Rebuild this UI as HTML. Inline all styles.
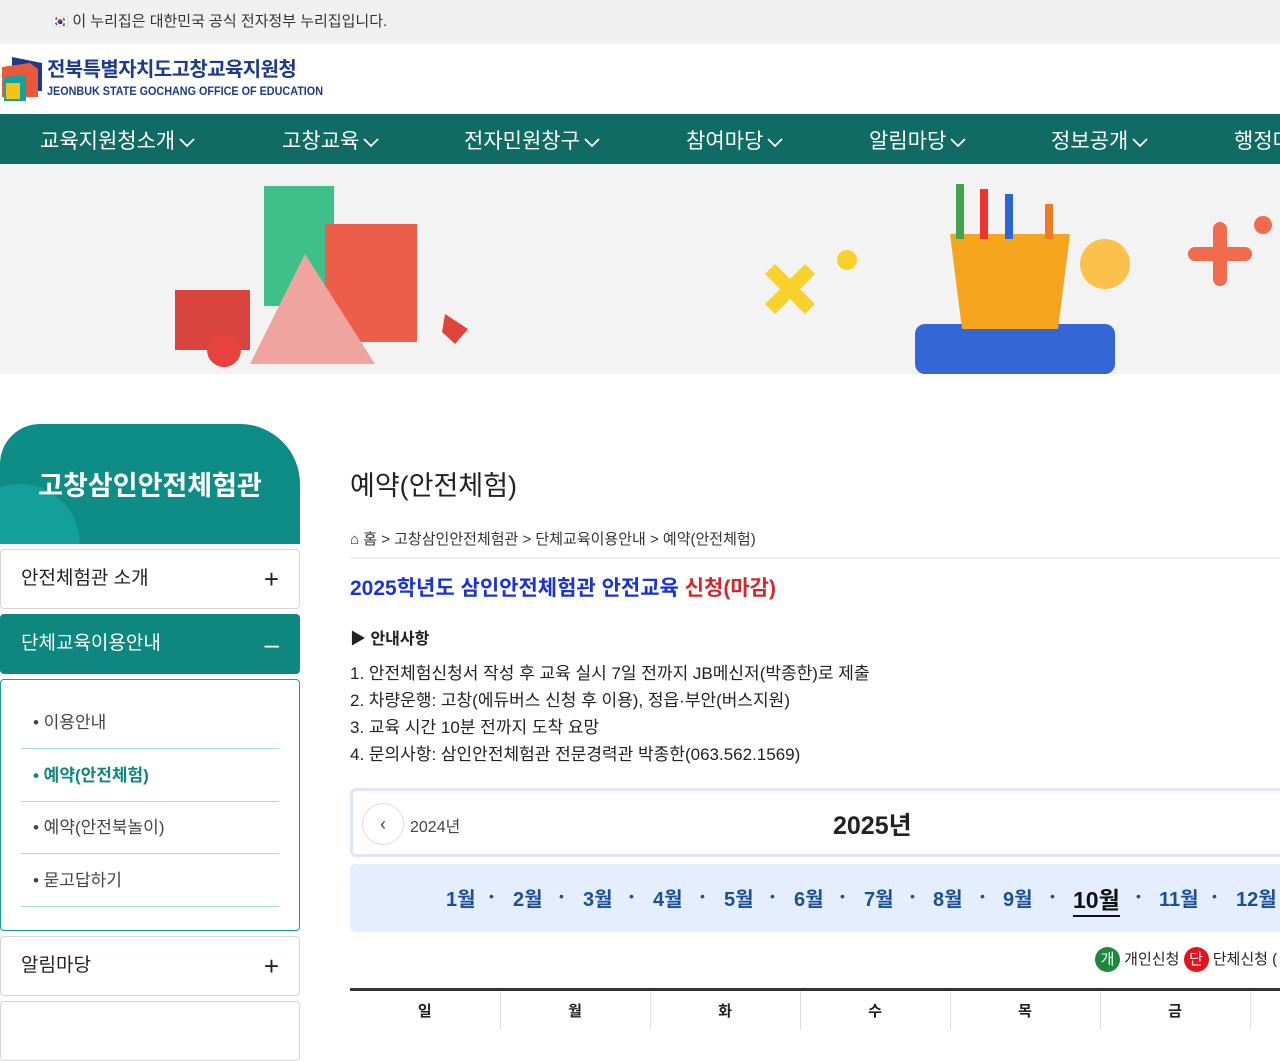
<!DOCTYPE html>
<html><head><meta charset="utf-8"><style>
*{margin:0;padding:0;box-sizing:border-box}
body{width:1280px;height:1024px;overflow:hidden;font-family:"Liberation Sans","Noto Sans CJK KR",sans-serif;background:#fff;color:#222;position:relative}
.abs{position:absolute}
.top{left:0;top:0;width:1280px;height:44px;background:#f0f0f0;font-size:15px;line-height:44px;padding-left:52px;color:#333}
.nav{left:0;top:114px;width:1280px;height:50px;background:#0f6b63;color:#fff;font-size:21px}
.nav span{position:absolute;top:11px;white-space:nowrap}
.nav svg{vertical-align:middle;margin-left:3px}
.banner{left:0;top:164px;width:1280px;height:210px;background:#f3f3f3;overflow:hidden}
.side{left:0;width:300px}
.item{border:1px solid #d6d6d6;border-radius:4px;height:60px;font-size:19px;line-height:58px;padding-left:20px;background:#fff}
.item b{position:absolute;right:20px;font-weight:normal;font-size:26px}
.sub{font-size:17px;color:#444;position:absolute;left:20px;width:258px;border-bottom:1px solid #a8dcd7;height:52px;line-height:52px;padding-left:12px}
.mon{position:absolute;top:883px;font-size:20px;font-weight:bold;color:#1a4f9a}
.dot{position:absolute;top:888px;font-size:14px;color:#1a4f9a}
th{font-size:15px;font-weight:bold}
</style></head><body>
<div class="abs top"><span style="font-size:13px">🇰🇷</span> 이 누리집은 대한민국 공식 전자정부 누리집입니다.</div>
<svg class="abs" style="left:2px;top:57px" width="40" height="44"><polygon points="10,0 40,6 40,34 10,34" fill="#1d3b8a"/><polygon points="0,10 28,6 36,12 36,40 0,40" fill="#e95a3d"/><polygon points="2,20 24,18 24,44 2,44" fill="#12a3a0"/><rect x="4" y="26" width="14" height="16" fill="#f3c316"/></svg>
<div class="abs" style="left:47px;top:58px;font-size:20px;line-height:24px;font-weight:bold;color:#1d3b8a;letter-spacing:-0.6px;white-space:nowrap">전북특별자치도고창교육지원청</div>
<div class="abs" style="left:47px;top:85px;font-size:12px;line-height:13px;font-weight:bold;color:#1d3b8a;white-space:nowrap;transform:scaleX(0.9);transform-origin:left">JEONBUK STATE GOCHANG OFFICE OF EDUCATION</div>
<div class="abs nav">
<span style="left:40px">교육지원청소개<svg width="18" height="12"><path d="M2 3l7 7 7-7" stroke="#fff" stroke-width="1.8" fill="none"/></svg></span>
<span style="left:282px">고창교육<svg width="18" height="12"><path d="M2 3l7 7 7-7" stroke="#fff" stroke-width="1.8" fill="none"/></svg></span>
<span style="left:464px">전자민원창구<svg width="18" height="12"><path d="M2 3l7 7 7-7" stroke="#fff" stroke-width="1.8" fill="none"/></svg></span>
<span style="left:686px">참여마당<svg width="18" height="12"><path d="M2 3l7 7 7-7" stroke="#fff" stroke-width="1.8" fill="none"/></svg></span>
<span style="left:869px">알림마당<svg width="18" height="12"><path d="M2 3l7 7 7-7" stroke="#fff" stroke-width="1.8" fill="none"/></svg></span>
<span style="left:1051px">정보공개<svg width="18" height="12"><path d="M2 3l7 7 7-7" stroke="#fff" stroke-width="1.8" fill="none"/></svg></span>
<span style="left:1234px">행정마당</span>
</div>
<div class="abs banner">
<svg width="1280" height="210">
<rect x="264" y="22" width="70" height="120" fill="#3fbf8a"/>
<rect x="175" y="126" width="75" height="60" fill="#d9443e"/>
<rect x="325" y="60" width="92" height="118" fill="#ec5e4a"/>
<polygon points="305,90 250,200 375,200" fill="#efa4a0"/>
<circle cx="224" cy="186" r="17" fill="#e8423e"/>
<polygon points="445,150 468,165 455,180 442,168" fill="#e2443a"/>
<path d="M770 105 l40 40 M810 105 l-40 40" stroke="#f8d22a" stroke-width="14"/>
<circle cx="847" cy="96" r="10" fill="#f8d22a"/>
<rect x="915" y="160" width="200" height="50" rx="10" fill="#3566d5"/>
<path d="M950 70 h120 l-12 95 h-96 z" fill="#f5a51d"/>
<rect x="956" y="20" width="8" height="55" fill="#3fa34d"/><rect x="980" y="25" width="8" height="50" fill="#e33"/><rect x="1005" y="30" width="8" height="45" fill="#2b68d6"/><rect x="1045" y="40" width="8" height="35" fill="#f07a22"/>
<circle cx="1105" cy="100" r="25" fill="#fbc14a"/>
<path d="M1195 90 h50 M1220 65 v50" stroke="#f26b4d" stroke-width="14" stroke-linecap="round"/>
<circle cx="1263" cy="61" r="9" fill="#f26b4d"/>
</svg></div>
<div class="abs side" style="top:424px;height:120px;background:#0e8c86;border-radius:40px 60px 0 0;overflow:hidden">
<div style="position:absolute;left:-40px;top:60px;width:120px;height:120px;border-radius:50%;background:#13a09a"></div>
<div style="position:relative;text-align:center;color:#fff;font-size:27px;font-weight:bold;line-height:124px">고창삼인안전체험관</div></div>
<div class="abs side item" style="top:549px">안전체험관 소개<b>+</b></div>
<div class="abs side item" style="top:614px;background:#0e8780;color:#fff;border-color:#0e8780">단체교육이용안내<b>–</b></div>
<div class="abs side" style="top:679px;height:252px;border:1px solid #1a9b94;border-radius:4px">
<div class="sub" style="top:17px">• 이용안내</div>
<div class="sub" style="top:70px;color:#0e8780;font-weight:bold">• 예약(안전체험)</div>
<div class="sub" style="top:122px">• 예약(안전북놀이)</div>
<div class="sub" style="top:175px">• 묻고답하기</div>
</div>
<div class="abs side item" style="top:936px">알림마당<b>+</b></div>
<div class="abs side item" style="top:1001px"></div>
<div class="abs" style="left:350px;top:464px;font-size:27px">예약(안전체험)</div>
<div class="abs" style="left:350px;top:528px;font-size:15px;color:#333">⌂ 홈 &gt; 고창삼인안전체험관 &gt; 단체교육이용안내 &gt; 예약(안전체험)</div>
<div class="abs" style="left:350px;top:557px;width:930px;border-top:2px solid #eee"></div>
<div class="abs" style="left:350px;top:572px;font-size:21px;font-weight:bold;color:#1a33d6">2025학년도 삼인안전체험관 안전교육 <span style="color:#d6262b">신청(마감)</span></div>
<div class="abs" style="left:350px;top:625px;font-size:16px;font-weight:bold">▶ 안내사항</div>
<div class="abs" style="left:350px;top:660px;font-size:17px;line-height:27px;color:#222">1. 안전체험신청서 작성 후 교육 실시 7일 전까지 JB메신저(박종한)로 제출<br>2. 차량운행: 고창(에듀버스 신청 후 이용), 정읍·부안(버스지원)<br>3. 교육 시간 10분 전까지 도착 요망<br>4. 문의사항: 삼인안전체험관 전문경력관 박종한(063.562.1569)</div>
<div class="abs" style="left:350px;top:788px;width:940px;height:69px;border:3px solid #dfe6fb;border-radius:6px"></div>
<div class="abs" style="left:362px;top:803px;width:42px;height:42px;border:1px solid #ddd;border-radius:50%;text-align:center;line-height:40px;font-size:18px;color:#444">‹</div>
<div class="abs" style="left:410px;top:813px;font-size:16px;color:#444">2024년</div>
<div class="abs" style="left:833px;top:806px;font-size:25px;font-weight:bold">2025년</div>
<div class="abs" style="left:350px;top:864px;width:940px;height:68px;background:#e4eefe;border-radius:6px"></div>
<span class="mon" style="left:446px">1월</span><span class="mon" style="left:513px">2월</span><span class="mon" style="left:583px">3월</span><span class="mon" style="left:653px">4월</span><span class="mon" style="left:724px">5월</span><span class="mon" style="left:794px">6월</span><span class="mon" style="left:864px">7월</span><span class="mon" style="left:933px">8월</span><span class="mon" style="left:1003px">9월</span><span class="mon" style="left:1073px;color:#111;font-size:23px;top:881px;border-bottom:2px solid #111">10월</span><span class="mon" style="left:1159px">11월</span><span class="mon" style="left:1236px">12월</span>
<span class="dot" style="left:489px">•</span><span class="dot" style="left:559px">•</span><span class="dot" style="left:629px">•</span><span class="dot" style="left:700px">•</span><span class="dot" style="left:770px">•</span><span class="dot" style="left:840px">•</span><span class="dot" style="left:910px">•</span><span class="dot" style="left:980px">•</span><span class="dot" style="left:1050px">•</span><span class="dot" style="left:1136px">•</span><span class="dot" style="left:1212px">•</span>
<div class="abs" style="left:1095px;top:947px;font-size:15px;white-space:nowrap"><span style="display:inline-block;width:25px;height:25px;border-radius:50%;background:#1b8a3c;color:#fff;text-align:center;line-height:25px">개</span> 개인신청 <span style="display:inline-block;width:25px;height:25px;border-radius:50%;background:#e3141e;color:#fff;text-align:center;line-height:25px">단</span> 단체신청 (</div>
<table class="abs" style="left:350px;top:988px;width:1050px;border-collapse:collapse;border-top:3px solid #333"><tr>
<th style="width:150px;height:40px;border-right:1px solid #ddd">일</th><th style="width:150px;border-right:1px solid #ddd">월</th><th style="width:150px;border-right:1px solid #ddd">화</th><th style="width:150px;border-right:1px solid #ddd">수</th><th style="width:150px;border-right:1px solid #ddd">목</th><th style="width:150px;border-right:1px solid #ddd">금</th><th>토</th></tr></table>
</body></html>
